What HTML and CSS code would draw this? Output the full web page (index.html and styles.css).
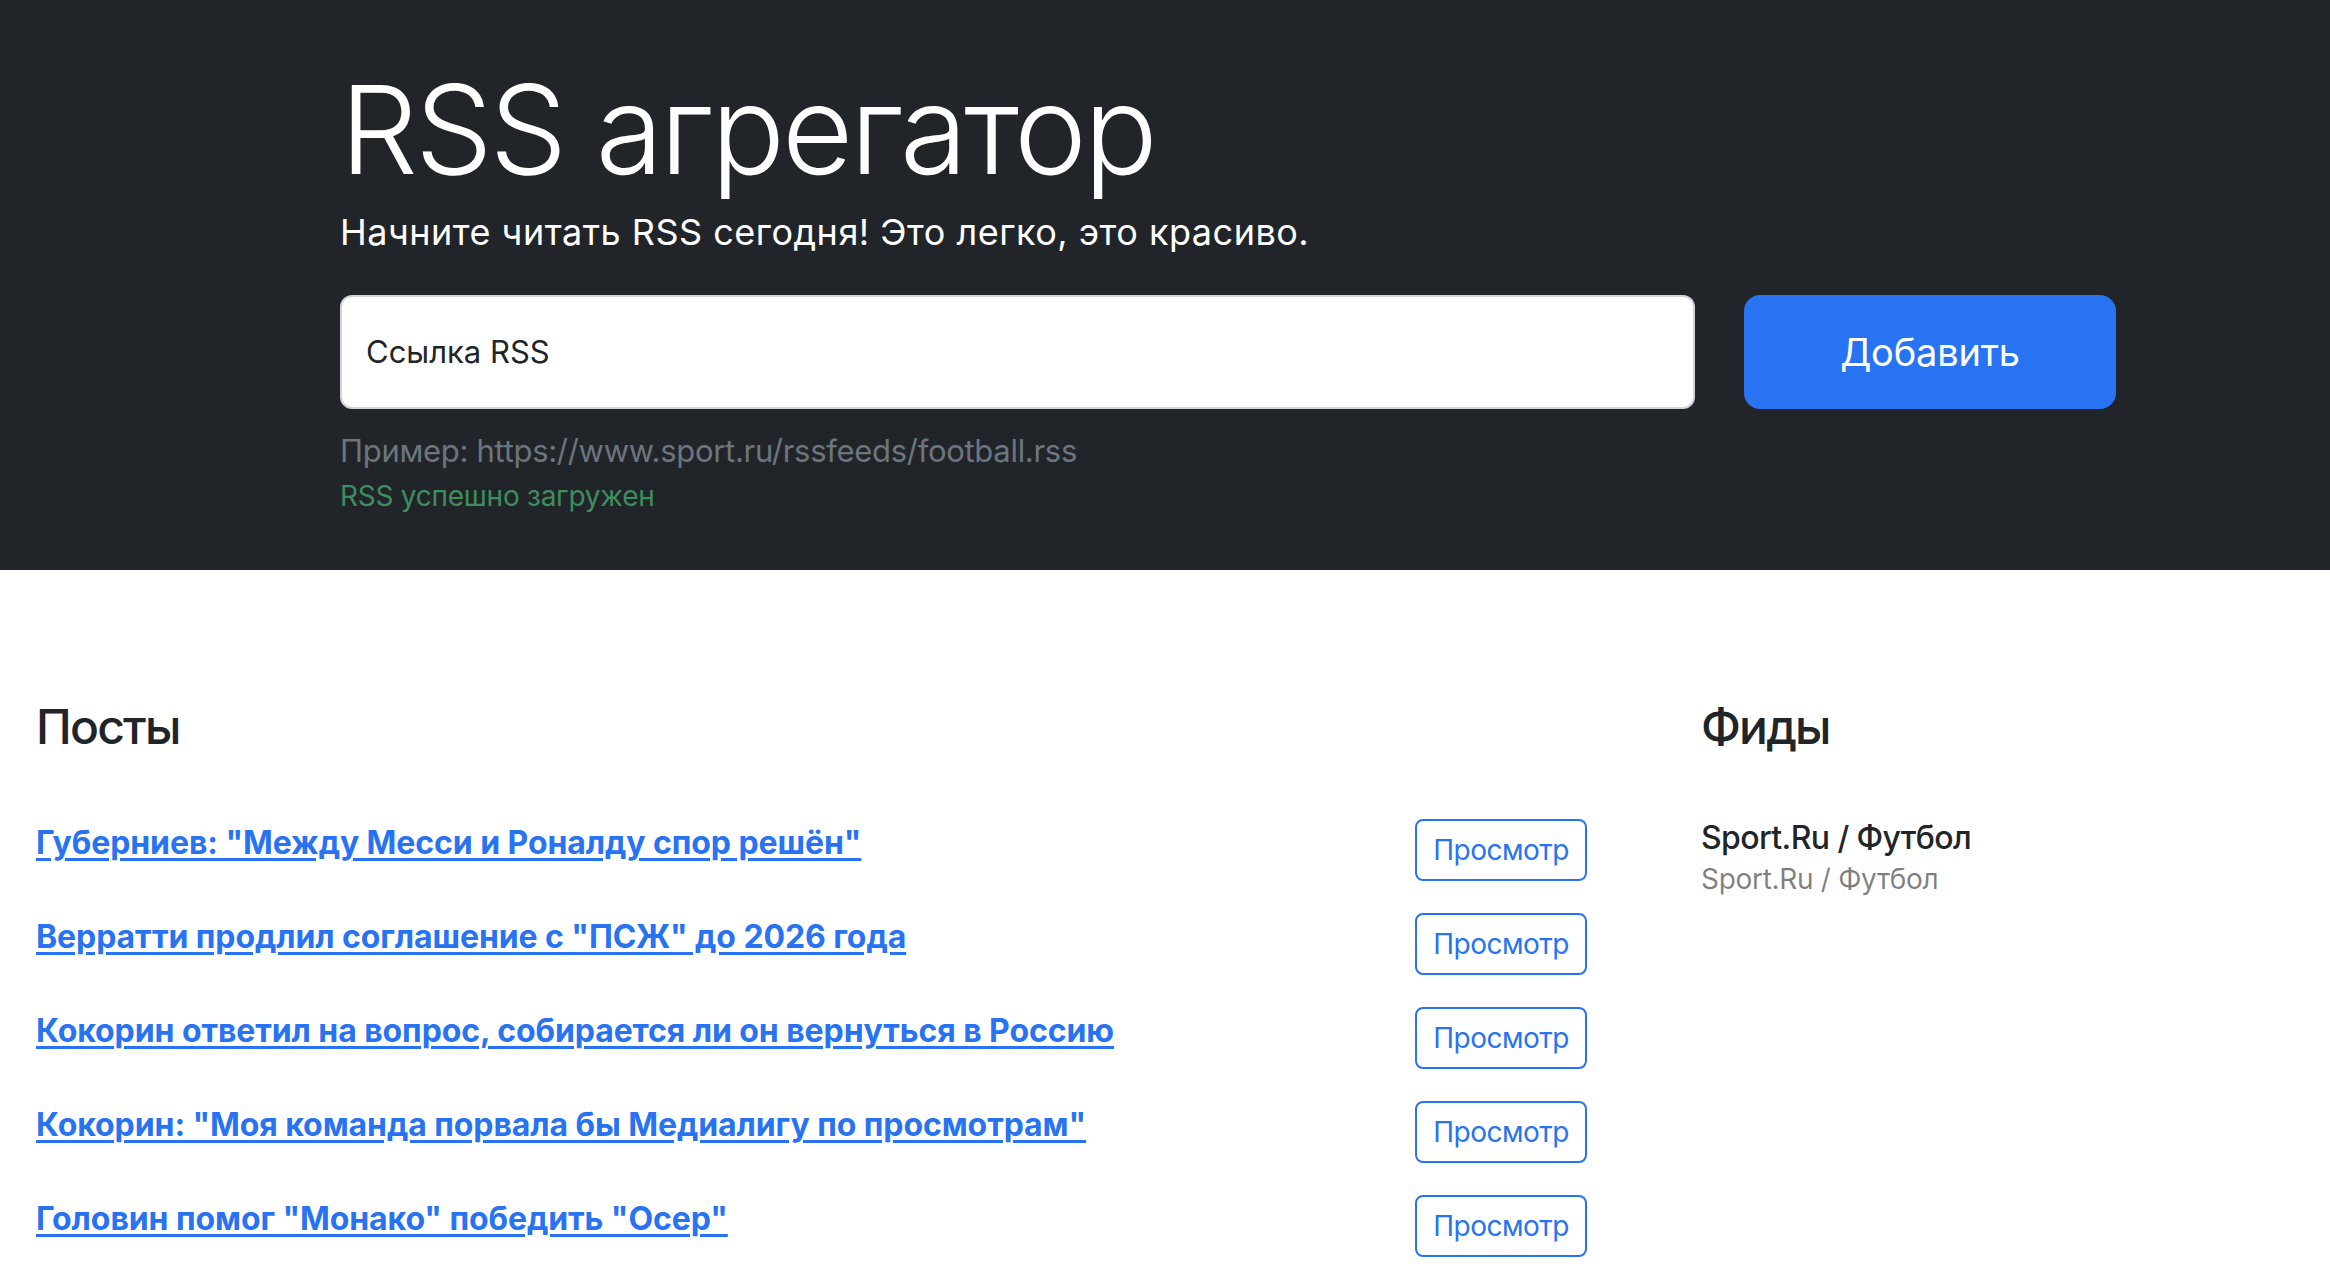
FILE: index.html
```html
<!DOCTYPE html>
<html lang="ru">
<head>
<meta charset="utf-8">
<title>RSS агрегатор</title>
<link rel="stylesheet" href="styles.css">
</head>
<body>
<section class="hero">
  <div class="hero-inner">
    <h1 class="title">RSS агрегатор</h1>
    <p class="lead">Начните читать RSS сегодня! Это легко, это красиво.</p>
    <form class="rss-form">
      <input class="url-input" type="text" placeholder="Ссылка RSS" aria-label="Ссылка RSS">
      <button type="button" class="btn-add">Добавить</button>
    </form>
    <p class="example">Пример: https://www.sport.ru/rssfeeds/football.rss</p>
    <p class="feedback">RSS успешно загружен</p>
  </div>
</section>
<main class="content">
  <section class="posts">
    <div class="card-body"><h2 class="card-title">Посты</h2></div>
    <ul class="post-list">
      <li class="post-item"><a href="#" class="post-link">Губерниев: "Между Месси и Роналду спор решён"</a><button type="button" class="btn-view">Просмотр</button></li>
      <li class="post-item"><a href="#" class="post-link">Верратти продлил соглашение с "ПСЖ" до 2026 года</a><button type="button" class="btn-view">Просмотр</button></li>
      <li class="post-item"><a href="#" class="post-link">Кокорин ответил на вопрос, собирается ли он вернуться в Россию</a><button type="button" class="btn-view">Просмотр</button></li>
      <li class="post-item"><a href="#" class="post-link">Кокорин: "Моя команда порвала бы Медиалигу по просмотрам"</a><button type="button" class="btn-view">Просмотр</button></li>
      <li class="post-item"><a href="#" class="post-link">Головин помог "Монако" победить "Осер"</a><button type="button" class="btn-view">Просмотр</button></li>
    </ul>
  </section>
  <section class="feeds">
    <div class="card-body"><h2 class="card-title">Фиды</h2></div>
    <ul class="feed-list">
      <li class="feed-item">
        <h3 class="feed-title">Sport.Ru / Футбол</h3>
        <p class="feed-desc">Sport.Ru / Футбол</p>
      </li>
    </ul>
  </section>
</main>
</body>
</html>
```

FILE: styles.css
```css
* { box-sizing: border-box; }

html, body {
  margin: 0;
  padding: 0;
  background: #ffffff;
  color: #212529;
  font-family: Inter, "Noto Sans", sans-serif;
  overflow: hidden;
}

.hero {
  background: #212529;
  color: #ffffff;
  padding: 56px 0 53px;
}

.hero-inner {
  margin-left: 340px;
  width: 1776px;
}

.title {
  margin: 0;
  font-size: 123px;
  font-weight: 300;
  line-height: 1.21;
  letter-spacing: -3.1px;
}

.lead {
  margin: 0 0 36px;
  font-size: 36px;
  font-weight: 400;
  line-height: 1.5;
  letter-spacing: 0.5px;
}

.rss-form {
  display: flex;
  gap: 49px;
  height: 114px;
}

.url-input {
  flex: 1;
  height: 100%;
  border: 2px solid #ced4da;
  border-radius: 12px;
  background: #ffffff;
  padding: 0 24px;
  font-family: inherit;
  font-size: 31px;
  color: #212529;
  outline: none;
}

.url-input::placeholder {
  color: #212529;
  opacity: 1;
}

.btn-add {
  width: 372px;
  border: none;
  border-radius: 16px;
  background: #2873f2;
  color: #ffffff;
  font-family: inherit;
  font-size: 38px;
  font-weight: 400;
  letter-spacing: -0.2px;
  cursor: pointer;
}

.example {
  margin: 18px 0 0;
  font-size: 31px;
  line-height: 1.55;
  letter-spacing: -0.3px;
  color: #6c757d;
}

.feedback {
  margin: 0;
  font-size: 28px;
  line-height: 1.5;
  letter-spacing: -0.25px;
  color: #3f8c5e;
}

.content {
  display: flex;
  padding: 96px 0 0 4px;
}

.posts {
  width: 1615px;
}

.feeds {
  margin-left: 50px;
  flex: 1;
}

.card-body {
  padding: 32px;
}

.card-title {
  margin: 0 0 16px;
  font-size: 48px;
  font-weight: 500;
  line-height: 1.2;
  letter-spacing: -1.8px;
  color: #212529;
}

.post-list,
.feed-list {
  list-style: none;
  margin: 0;
  padding: 0;
}

.post-item {
  display: flex;
  justify-content: space-between;
  align-items: flex-start;
  padding: 16px 32px;
}

.post-link {
  font-size: 32px;
  font-weight: 700;
  line-height: 1.5;
  letter-spacing: -0.08px;
  color: #2873f2;
  text-decoration: underline;
  text-decoration-thickness: 3px;
  text-underline-offset: 4px;
}

.btn-view {
  border: 2px solid #2873f2;
  border-radius: 8px;
  background: #ffffff;
  color: #2873f2;
  padding: 8px 16px;
  font-family: inherit;
  font-size: 28px;
  line-height: 1.5;
  letter-spacing: -0.5px;
  cursor: pointer;
}

.feed-item {
  padding: 16px 32px;
}

.feed-title {
  margin: 0;
  font-size: 32px;
  font-weight: 500;
  line-height: 1.2;
  letter-spacing: -0.6px;
  color: #212529;
}

.feed-desc {
  margin: 0;
  font-size: 28px;
  line-height: 1.5;
  letter-spacing: -0.3px;
  color: rgba(0, 0, 0, 0.5);
}
```
